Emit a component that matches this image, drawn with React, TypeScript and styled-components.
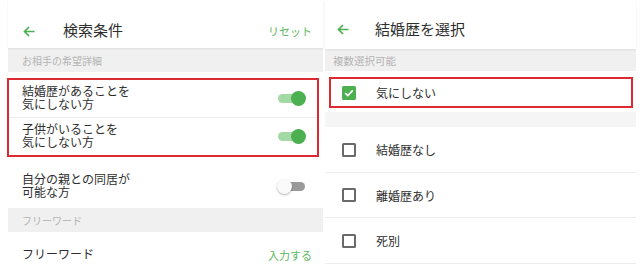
import React from 'react';
import styled, { createGlobalStyle } from 'styled-components';

const GlobalStyle = createGlobalStyle`
  html, body {
    margin: 0;
    padding: 0;
    background: #fff;
  }
  body {
    font-family: Roboto, "Noto Sans CJK JP", sans-serif;
    color: #333;
  }
`;

const GREEN = '#4caf50';
const RED = '#dc2a33';

const Page = styled.div`
  display: flex;
  gap: 2px;
  padding-left: 8px;
  width: 640px;
  height: 264px;
  overflow: hidden;
  box-sizing: border-box;
`;

const Panel = styled.div<{ $width: number }>`
  width: ${(p) => p.$width}px;
  flex-shrink: 0;
  display: flex;
  flex-direction: column;
`;

const Header = styled.div<{ $left: number; $gap: number; $top: number; $height: number }>`
  height: ${(p) => p.$height}px;
  box-sizing: border-box;
  display: flex;
  align-items: center;
  padding: ${(p) => p.$top}px 11px 0 ${(p) => p.$left}px;
  gap: ${(p) => p.$gap}px;
  position: relative;
  z-index: 1;
  box-shadow: 0 1px 2px rgba(0, 0, 0, 0.08);
  background: #fff;
`;

const Title = styled.div`
  flex: 1;
  font-size: 15px;
  line-height: 18px;
  color: #2e2e2e;
`;

const HeaderAction = styled.div`
  font-size: 11px;
  color: #5cb860;
`;

const Band = styled.div<{ $height: number; $left: number; $size: number }>`
  height: ${(p) => p.$height}px;
  display: flex;
  align-items: center;
  padding-left: ${(p) => p.$left}px;
  background: #f0f0f0;
  font-size: ${(p) => p.$size}px;
  color: #b3b3b3;
`;

const Highlight = styled.div`
  border: 2px solid ${RED};
  margin: 6px 4px 0 -1px;
  display: flex;
  flex-direction: column;
`;

const SwitchRow = styled.div<{ $pad: string; $height?: number; $divider?: boolean }>`
  display: flex;
  align-items: center;
  justify-content: space-between;
  padding: ${(p) => p.$pad};
  ${(p) => (p.$height ? `height: ${p.$height}px; box-sizing: border-box;` : '')}
  ${(p) => (p.$divider ? 'border-bottom: 1px solid #eeeeee;' : '')}
`;

const Label = styled.div<{ $lh?: number }>`
  font-size: 12px;
  line-height: ${(p) => p.$lh ?? 12.5}px;
  color: #2e2e2e;
`;

const SwitchBox = styled.div`
  position: relative;
  width: 29px;
  height: 15px;
  flex-shrink: 0;
`;

const Track = styled.div<{ $on: boolean }>`
  position: absolute;
  left: ${(p) => (p.$on ? '1px' : '4px')};
  right: 1px;
  top: 3px;
  height: 9px;
  border-radius: 5px;
  background: ${(p) => (p.$on ? '#a3d9a5' : '#9a9a9a')};
`;

const Knob = styled.div<{ $on: boolean }>`
  position: absolute;
  top: 0;
  ${(p) => (p.$on ? 'right: 0;' : 'left: 0;')}
  width: 15px;
  height: 15px;
  border-radius: 50%;
  background: ${(p) => (p.$on ? GREEN : '#fafafa')};
  box-shadow: ${(p) => (p.$on ? 'none' : '0 1px 2px rgba(0,0,0,0.3)')};
`;

const LinkText = styled.div`
  font-size: 11px;
  color: #5cb860;
`;

const SelectedWrap = styled.div`
  height: 41px;
  box-sizing: border-box;
  padding: 6px 3px 4px 4px;
`;

const SelectedBox = styled.div`
  height: 31px;
  box-sizing: border-box;
  border: 2px solid ${RED};
  display: flex;
  align-items: center;
  padding-left: 11px;
  gap: 20px;
`;

const Spacer = styled.div`
  height: 15px;
  background: #f5f5f5;
`;

const OptionRow = styled.div`
  height: 46px;
  box-sizing: border-box;
  border-bottom: 1px solid #eeeeee;
  display: flex;
  align-items: center;
  padding-left: 17px;
  gap: 20px;
`;

const Check = styled.div<{ $checked: boolean }>`
  width: 14px;
  height: 14px;
  box-sizing: border-box;
  border-radius: 1.5px;
  flex-shrink: 0;
  display: flex;
  align-items: center;
  justify-content: center;
  background: ${(p) => (p.$checked ? GREEN : '#fff')};
  border: ${(p) => (p.$checked ? 'none' : '2px solid #6a6a6a')};
`;

const OptionText = styled.div`
  font-size: 12px;
  color: #2e2e2e;
`;

function BackArrow() {
  return (
    <svg width="12" height="11" viewBox="0 0 12 11" fill="none">
      <path d="M11.5 5.5H1.5M6 1L1.5 5.5L6 10" stroke={GREEN} strokeWidth="1.7" />
    </svg>
  );
}

function Toggle({ on }: { on: boolean }) {
  return (
    <SwitchBox>
      <Track $on={on} />
      <Knob $on={on} />
    </SwitchBox>
  );
}

function CheckBox({ checked }: { checked: boolean }) {
  return (
    <Check $checked={checked}>
      {checked && (
        <svg width="10" height="8" viewBox="0 0 10 8" fill="none">
          <path d="M1.2 4.2L3.8 6.6L8.8 1.3" stroke="#fff" strokeWidth="1.7" />
        </svg>
      )}
    </Check>
  );
}

function TwoLines({ a, b }: { a: string; b: string }) {
  return (
    <Label>
      {a}
      <br />
      {b}
    </Label>
  );
}

const options = ['結婚歴なし', '離婚歴あり', '死別'];

export default function App() {
  return (
    <>
      <GlobalStyle />
      <Page>
        <Panel $width={315}>
          <Header $left={15} $gap={28} $top={14} $height={48}>
            <BackArrow />
            <Title>検索条件</Title>
            <HeaderAction>リセット</HeaderAction>
          </Header>
          <Band $height={24} $left={14} $size={10}>
            お相手の希望詳細
          </Band>
          <Highlight>
            <SwitchRow $pad="0 11px 0 13px" $height={38} $divider>
              <TwoLines a="結婚歴があることを" b="気にしない方" />
              <Toggle on />
            </SwitchRow>
            <SwitchRow $pad="0 11px 0 13px" $height={37}>
              <TwoLines a="子供がいることを" b="気にしない方" />
              <Toggle on />
            </SwitchRow>
          </Highlight>
          <SwitchRow $pad="17px 17px 9px 14px">
            <TwoLines a="自分の親との同居が" b="可能な方" />
            <Toggle on={false} />
          </SwitchRow>
          <Band $height={24} $left={14} $size={10}>
            フリーワード
          </Band>
          <SwitchRow $pad="15px 11px 0 14px">
            <Label $lh={14}>フリーワード</Label>
            <LinkText>入力する</LinkText>
          </SwitchRow>
        </Panel>
        <Panel $width={311}>
          <Header $left={12} $gap={26} $top={11} $height={49}>
            <BackArrow />
            <Title>結婚歴を選択</Title>
          </Header>
          <Band $height={23} $left={8} $size={10.5}>
            複数選択可能
          </Band>
          <SelectedWrap>
            <SelectedBox>
              <CheckBox checked />
              <OptionText>気にしない</OptionText>
            </SelectedBox>
          </SelectedWrap>
          <Spacer />
          {options.map((o) => (
            <OptionRow key={o}>
              <CheckBox checked={false} />
              <OptionText>{o}</OptionText>
            </OptionRow>
          ))}
        </Panel>
      </Page>
    </>
  );
}
